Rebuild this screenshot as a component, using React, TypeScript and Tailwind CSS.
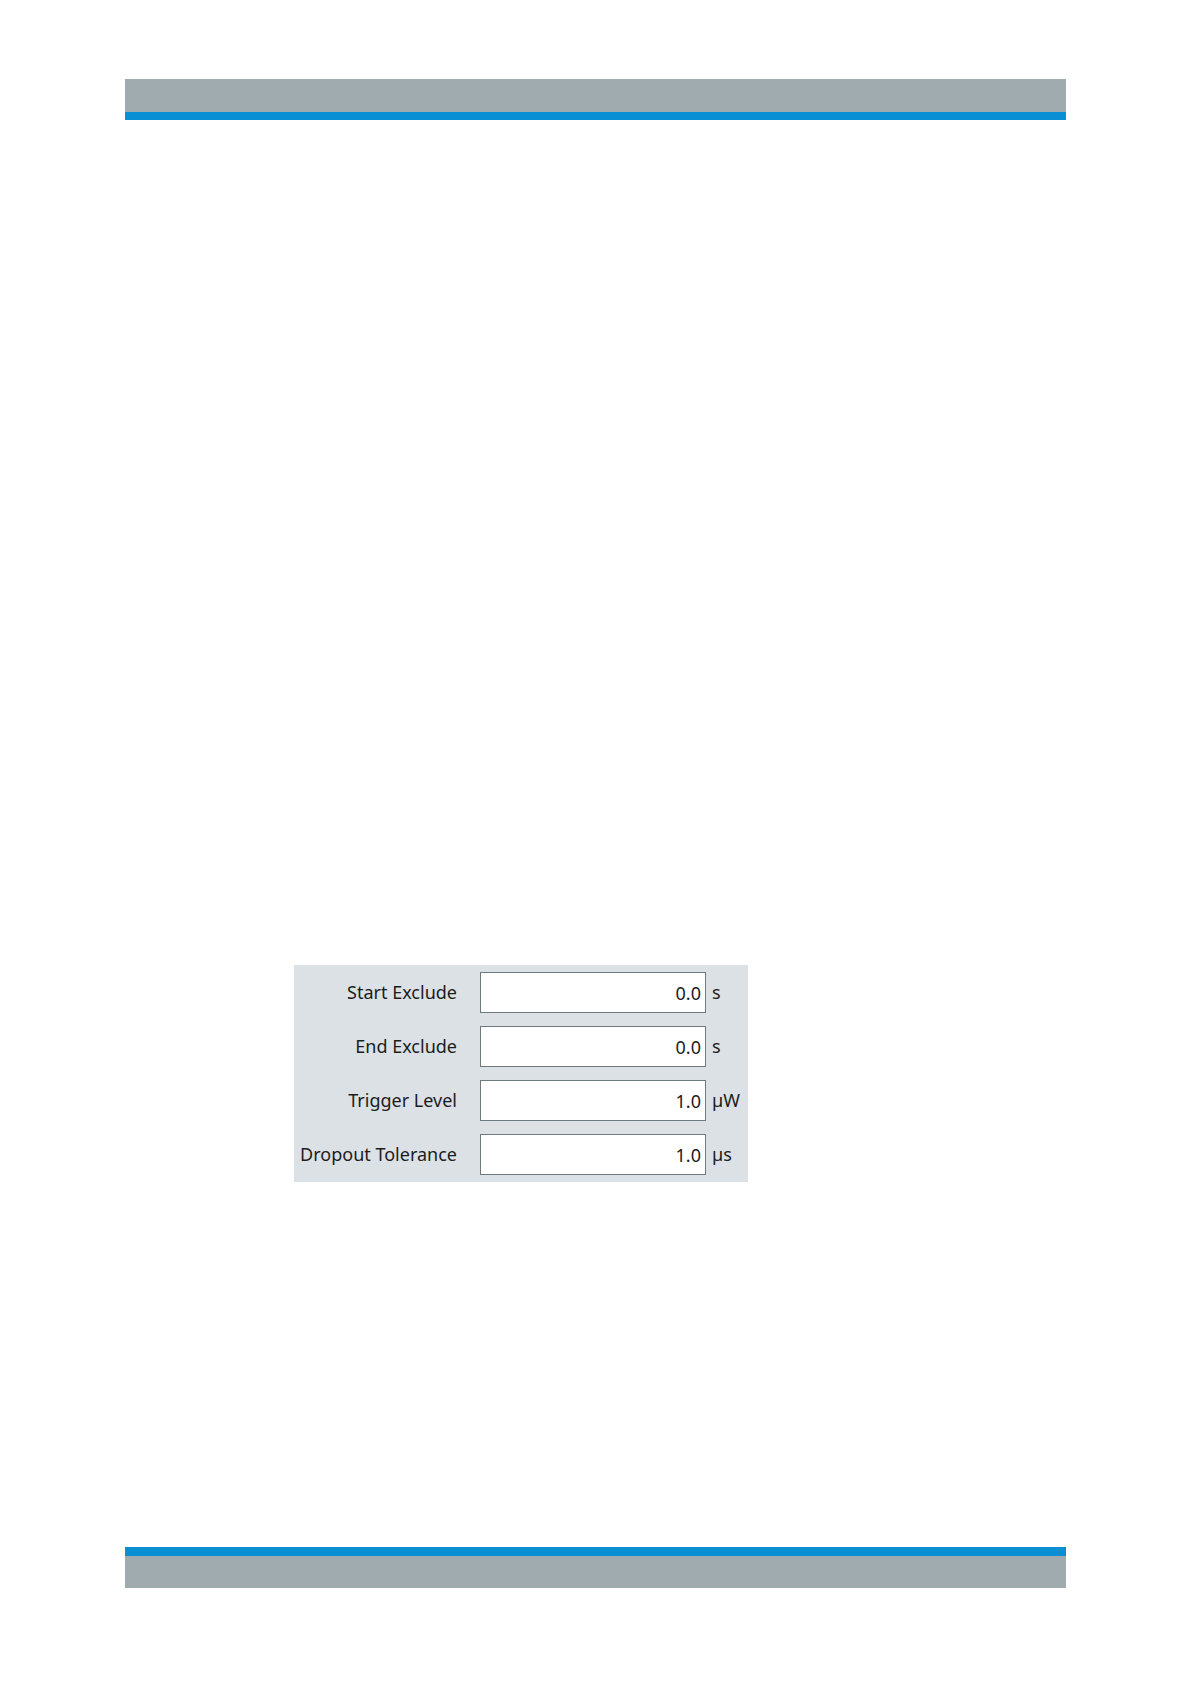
interface Setting {
  id: string;
  label: string;
  value: string;
  unit: string;
}

const settings: Setting[] = [
  { id: "start-exclude", label: "Start Exclude", value: "0.0", unit: "s" },
  { id: "end-exclude", label: "End Exclude", value: "0.0", unit: "s" },
  { id: "trigger-level", label: "Trigger Level", value: "1.0", unit: "µW" },
  { id: "dropout-tolerance", label: "Dropout Tolerance", value: "1.0", unit: "µs" },
];

function SettingRow({ id, label, value, unit }: Setting) {
  return (
    <div className="flex h-[41px] items-center">
      <label htmlFor={id} className="w-[163px] shrink-0 text-right whitespace-nowrap">
        {label}
      </label>
      <input
        id={id}
        type="text"
        inputMode="decimal"
        defaultValue={value}
        className="ml-[23px] h-full min-w-0 flex-1 border border-[#6e7a80] bg-white px-1 text-right outline-none"
      />
      <span className="ml-1.5 w-9 shrink-0">{unit}</span>
    </div>
  );
}

export default function App() {
  return (
    <div className="flex min-h-screen flex-col bg-white px-[125px] pt-[79px] pb-24 font-['Noto_Sans',sans-serif] text-[18px] text-[#1c1c1c]">
      <header className="h-[41px] border-b-8 border-[#0a8fd4] bg-[#a0abb0]" />

      <main className="flex-1 pt-[845px] pl-[169px]">
        <form className="flex w-full max-w-[454px] flex-col gap-[13px] bg-[#dce1e6] py-[7px]">
          {settings.map((setting) => (
            <SettingRow key={setting.id} {...setting} />
          ))}
        </form>
      </main>

      <footer className="h-[41px] border-t-[9px] border-[#0a8fd4] bg-[#a0abb0]" />
    </div>
  );
}
